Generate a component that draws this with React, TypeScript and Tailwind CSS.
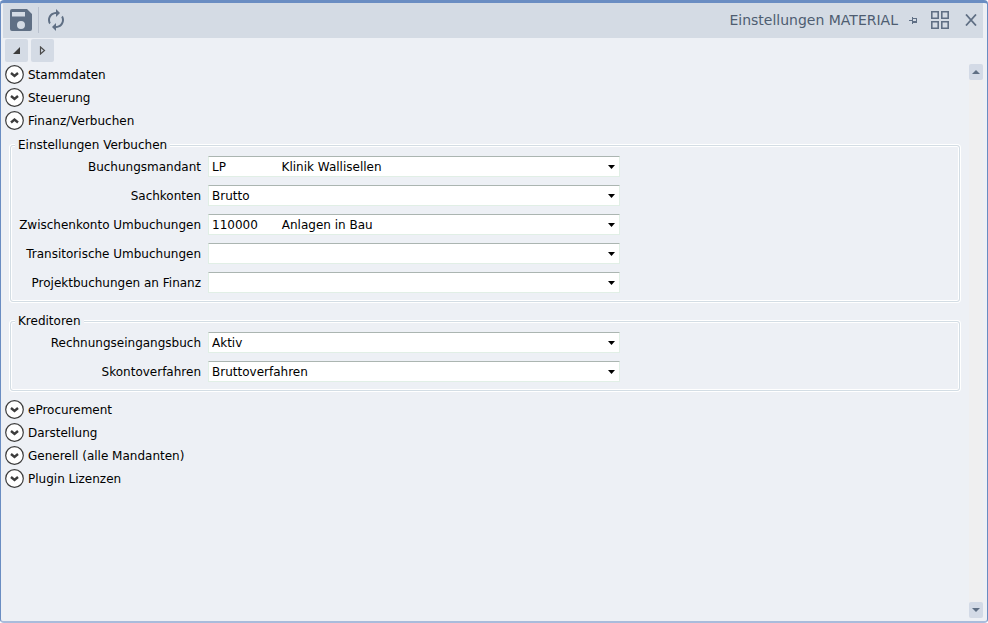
import clsx from "clsx";
import type { ReactNode } from "react";
import { MdAutorenew } from "react-icons/md";

type Field = {
	id: string;
	label: string;
	value: string;
};

// Code and description share one option, kept apart by fixed-width spaces
const verbuchenFields: Field[] = [
	{
		id: "buchungsmandant",
		label: "Buchungsmandant",
		value: "LP\u2003\u2003\u2003\u2003\u00a0\u00a0Klinik Wallisellen",
	},
	{ id: "sachkonten", label: "Sachkonten", value: "Brutto" },
	{
		id: "zwischenkonto",
		label: "Zwischenkonto Umbuchungen",
		value: "110000\u2003\u2003Anlagen in Bau",
	},
	{ id: "transitorische", label: "Transitorische Umbuchungen", value: "" },
	{ id: "projektbuchungen", label: "Projektbuchungen an Finanz", value: "" },
];

const kreditorenFields: Field[] = [
	{ id: "rechnungseingang", label: "Rechnungseingangsbuch", value: "Aktiv" },
	{ id: "skonto", label: "Skontoverfahren", value: "Bruttoverfahren" },
];

const SaveIcon = () => (
	<svg aria-hidden="true" className="size-6" viewBox="0 0 24 24">
		<path
			d="M3 1h15l5 5v15a2 2 0 0 1-2 2H3a2 2 0 0 1-2-2V3a2 2 0 0 1 2-2Zm0 3v4.500h13V4Zm9 9a4 4 0 1 0 0 8 4 4 0 0 0 0-8Z"
			fill="#5f6f84"
			fillRule="evenodd"
		/>
	</svg>
);

const PinIcon = () => (
	<svg
		aria-hidden="true"
		className="h-2 w-2"
		fill="none"
		shapeRendering="crispEdges"
		stroke="#5f6f84"
		viewBox="0 0 8 8"
	>
		<path d="M0 4.500h3M3.500 1v7M4 2.500h3.500v3.500" />
		<path d="M4 6h4" strokeWidth="2" />
	</svg>
);

const TilesIcon = () => (
	<svg
		aria-hidden="true"
		className="h-[18px] w-[18px]"
		fill="none"
		stroke="#5f6f84"
		strokeWidth="1.6"
		viewBox="0 0 18 18"
	>
		<path d="M.8.8h6.400v6.400H.8ZM10.800.8h6.400v6.400h-6.400ZM.8 10.800h6.400v6.400H.8ZM10.800 10.800h6.400v6.400h-6.400Z" />
	</svg>
);

const CloseIcon = () => (
	<svg
		aria-hidden="true"
		className="h-3 w-3"
		fill="none"
		stroke="#5f6f84"
		strokeWidth="1.800"
		viewBox="0 0 12 12"
	>
		<path d="M1 .5l10 11M11 .5L1 11.500" />
	</svg>
);

const SectionHeader = ({
	title,
	open = false,
}: {
	title: string;
	open?: boolean;
}) => (
	<button
		aria-expanded={open}
		className="flex h-[23px] items-center gap-1 text-left"
		type="button"
	>
		<svg
			aria-hidden="true"
			className="size-[19px]"
			fill="none"
			stroke="#3c3c3c"
			viewBox="0 0 19 19"
		>
			<circle cx="9.500" cy="9.500" fill="#fff" r="8.800" strokeWidth="1.200" />
			<path
				d={open ? "M6 11.500l3.500-3 3.500 3" : "M6 8l3.500 3L13 8"}
				strokeWidth="2.400"
			/>
		</svg>
		<span>{title}</span>
	</button>
);

const FieldRow = ({ field }: { field: Field }) => (
	<div className="flex items-center gap-[7px]">
		<label className="w-[190px] shrink-0 text-right" htmlFor={field.id}>
			{field.label}
		</label>
		<div className="relative w-[412px]">
			<select
				className="block h-[21px] w-full appearance-none border border-t-[#abb5b1] border-r-[#e1efe6] border-b-[#e1efe6] border-l-[#e1efe6] bg-white pr-5 pl-[3px] outline-none"
				defaultValue={field.value}
				id={field.id}
			>
				<option value={field.value}>{field.value}</option>
			</select>
			<svg
				aria-hidden="true"
				className="pointer-events-none absolute top-[9px] right-[5px] h-1 w-[7px]"
				viewBox="0 0 7 4"
			>
				<path d="M0 0h7L3.500 4Z" fill="#000" />
			</svg>
		</div>
	</div>
);

const Group = ({
	legend,
	fields,
	className,
}: {
	legend: string;
	fields: Field[];
	className?: string;
}) => (
	<fieldset
		className={clsx(
			"mr-[9px] ml-[5px] rounded-[3px] border border-[#d3dde4] pb-2 shadow-[0_0_0_1px_#fff,inset_0_0_0_1px_#fff]",
			className
		)}
	>
		<legend className="ml-1 bg-[#edf0f5] px-[3px] leading-4">{legend}</legend>
		<div className="flex flex-col gap-2 pt-[3px]">
			{fields.map((field) => (
				<FieldRow field={field} key={field.id} />
			))}
		</div>
	</fieldset>
);

const ToolButton = ({
	label,
	children,
}: {
	label: string;
	children: ReactNode;
}) => (
	<button
		aria-label={label}
		className="flex size-[23px] items-center justify-center rounded-[2px] bg-[#d4dbe5]"
		type="button"
	>
		{children}
	</button>
);

const ScrollButton = ({ up = false }: { up?: boolean }) => (
	<button
		aria-label={up ? "Nach oben" : "Nach unten"}
		className="flex h-4 w-[14px] items-center justify-center rounded-[2px] bg-[#d3dae6]"
		type="button"
	>
		<svg aria-hidden="true" className="h-1 w-2" viewBox="0 0 8 4">
			<path d={up ? "M0 4h8L4 0Z" : "M0 0h8L4 4Z"} fill="#5f6f84" />
		</svg>
	</button>
);

export default function App() {
	return (
		<div className="flex min-h-screen flex-col rounded-[4px] border border-t-[3px] border-b-2 border-t-[#6a8dc2] border-r-[#6a8dc2] border-b-[#a9bcdc] border-l-[#6a8dc2] bg-[#edf0f5] font-['DejaVu_Sans',sans-serif] text-black text-xs">
			<header className="mr-1 ml-0.5 flex h-[35px] items-center bg-[#d4dbe4] pr-1.5 pb-px pl-1.5">
				<button aria-label="Speichern" type="button">
					<SaveIcon />
				</button>
				<div className="mx-[5px] h-[26px] w-px bg-[#b9c1ce]" />
				<button aria-label="Aktualisieren" type="button">
					<MdAutorenew className="size-6 text-[#5f6f84]" />
				</button>
				<h1 className="ml-auto text-[#4e5d71] text-sm">
					Einstellungen MATERIAL
				</h1>
				<button aria-label="Anheften" className="ml-[11px]" type="button">
					<PinIcon />
				</button>
				<button aria-label="Kacheln" className="ml-[14px]" type="button">
					<TilesIcon />
				</button>
				<button aria-label="Schliessen" className="ml-4" type="button">
					<CloseIcon />
				</button>
			</header>

			<div className="flex gap-[3px] px-1 pt-px">
				<ToolButton label="Zuklappen">
					<svg aria-hidden="true" className="size-[7px]" viewBox="0 0 7 7">
						<path d="M7 0v7H0Z" fill="#3c3c3c" />
					</svg>
				</ToolButton>
				<ToolButton label="Weiter">
					<svg
						aria-hidden="true"
						className="h-[9px] w-[7px]"
						fill="none"
						stroke="#4b4b4b"
						strokeWidth="1.2"
						viewBox="0 0 7 9"
					>
						<path d="M1.500 1v7L5.500 4.500Z" />
					</svg>
				</ToolButton>
			</div>

			<div className="flex grow pt-px pr-1 pb-[3px] pl-1">
				<main className="flex grow flex-col">
					<SectionHeader title="Stammdaten" />
					<SectionHeader title="Steuerung" />
					<SectionHeader open title="Finanz/Verbuchen" />
					<Group
						className="mt-[5px]"
						fields={verbuchenFields}
						legend="Einstellungen Verbuchen"
					/>
					<Group
						className="mt-[11px] mb-[7px]"
						fields={kreditorenFields}
						legend="Kreditoren"
					/>
					<SectionHeader title="eProcurement" />
					<SectionHeader title="Darstellung" />
					<SectionHeader title="Generell (alle Mandanten)" />
					<SectionHeader title="Plugin Lizenzen" />
				</main>
				<div className="mt-px flex flex-col justify-between bg-[#efeff0]">
					<ScrollButton up />
					<ScrollButton />
				</div>
			</div>
		</div>
	);
}
